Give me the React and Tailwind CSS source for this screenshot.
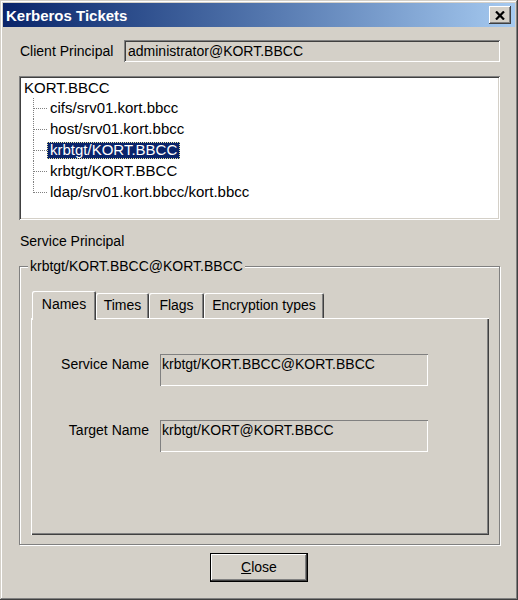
import React from 'react';

const treeItems = [
  { label: 'cifs/srv01.kort.bbcc' },
  { label: 'host/srv01.kort.bbcc' },
  { label: 'krbtgt/KORT.BBCC', selected: true },
  { label: 'krbtgt/KORT.BBCC' },
  { label: 'ldap/srv01.kort.bbcc/kort.bbcc', last: true },
];

const tabs = [
  { label: 'Names', w: 'w-[64px]', active: true },
  { label: 'Times', w: 'w-[53px]' },
  { label: 'Flags', w: 'w-[55px]' },
  { label: 'Encryption types', w: 'w-[120px]' },
];

// dotted tree connector for one child row
const Connector = ({ last }) => (
  <svg width="14" height="21" className="shrink-0">
    <line x1="0.5" y1="0" x2="0.5" y2={last ? 11 : 21} stroke="#808080" strokeDasharray="1 1" />
    <line x1="1" y1="10.5" x2="14" y2="10.5" stroke="#808080" strokeDasharray="1 1" />
  </svg>
);

const Field = ({ label, value }) => (
  <div className="flex">
    <div className="w-[118px] text-right pt-[2px] leading-[17px]">{label}</div>
    <div className="ml-[11px] w-[268px] h-[32px] pl-[2px] pt-[2px] leading-[17px] shadow-[inset_1px_1px_#808080,inset_-1px_-1px_#fff]">
      {value}
    </div>
  </div>
);

export default function App() {
  return (
    <div
      className="w-[518px] h-[600px] bg-[#d4d0c8] p-[3px] flex flex-col text-[14px] text-black shadow-[inset_-1px_-1px_#404040,inset_1px_1px_#d4d0c8,inset_-2px_-2px_#808080,inset_2px_2px_#fff]"
      style={{ fontFamily: '"Liberation Sans", Arial, sans-serif' }}
    >
      {/* Title bar */}
      <div className="h-[24px] shrink-0 bg-gradient-to-r from-[#0a246a] to-[#a6caf0] flex items-center justify-between pl-[3px] pr-[4px]">
        <span className="text-white font-bold text-[15px] leading-none">Kerberos Tickets</span>
        <button className="w-[22px] h-[18px] bg-[#d4d0c8] flex items-center justify-center shadow-[inset_-1px_-1px_#404040,inset_1px_1px_#fff,inset_-2px_-2px_#808080]">
          <svg width="10" height="9" viewBox="0 0 10 9">
            <path d="M1 0.5 L9 8.5 M9 0.5 L1 8.5" stroke="#000" strokeWidth="2.2" />
          </svg>
        </button>
      </div>

      <div className="flex-1 flex flex-col pl-[16px] pr-[15px]">
        {/* Client principal */}
        <div className="mt-[13px] flex items-center h-[22px]">
          <div className="w-[105px] pl-[1px]">Client Principal</div>
          <div className="flex-1 h-[22px] flex items-center pl-[4px] shadow-[inset_1px_1px_#808080,inset_-1px_-1px_#fff,inset_2px_2px_#404040,inset_-2px_-2px_#d4d0c8]">
            administrator@KORT.BBCC
          </div>
        </div>

        {/* Tree */}
        <div className="mt-[14px] h-[144px] bg-white p-[2px] text-[15px] shadow-[inset_1px_1px_#808080,inset_-1px_-1px_#fff,inset_2px_2px_#404040,inset_-2px_-2px_#d4d0c8]">
          <div className="h-[20px] pl-[3px] flex items-center">KORT.BBCC</div>
          <div className="pl-[12px]">
            {treeItems.map((it, i) => (
              <div key={i} className="flex items-center h-[21px]">
                <Connector last={it.last} />
                <span
                  className={
                    it.selected
                      ? 'px-[3px] h-[17px] flex items-center bg-[#0a246a] text-white outline-1 outline-dotted outline-[#e8e4a0] -outline-offset-1'
                      : 'px-[3px] h-[17px] flex items-center'
                  }
                >
                  {it.label}
                </span>
              </div>
            ))}
          </div>
        </div>

        {/* Service principal */}
        <div className="mt-[13px] h-[17px] leading-[17px] pl-[1px]">Service Principal</div>

        <fieldset className="mt-[8px] border border-[#808080] shadow-[inset_1px_1px_#fff,1px_1px_#fff] pl-[11px] pr-[10px] pb-[9px] pt-[16px] m-0">
          <legend className="bg-[#d4d0c8] px-[2px] ml-[-3px] h-[17px] leading-[17px]">krbtgt/KORT.BBCC@KORT.BBCC</legend>

          {/* Tabs */}
          <div className="flex items-end h-[27px] pl-[1px]">
            {tabs.map((t) => (
              <div
                key={t.label}
                className={
                  t.active
                    ? `${t.w} relative z-10 h-[29px] -mb-[2px] bg-[#d4d0c8] rounded-t-[2px] flex justify-center pt-[5px] shadow-[inset_1px_1px_#fff,inset_-1px_0_#404040,inset_-2px_0_#808080]`
                    : `${t.w} h-[25px] bg-[#d4d0c8] rounded-t-[2px] flex justify-center pt-[4px] shadow-[inset_1px_1px_#fff,inset_-1px_0_#404040,inset_-2px_0_#808080]`
                }
              >
                <span className="leading-[17px]">{t.label}</span>
              </div>
            ))}
          </div>

          {/* Tab panel */}
          <div className="h-[217px] pt-[36px] flex flex-col gap-[34px] shadow-[inset_1px_1px_#fff,inset_-1px_-1px_#404040,inset_-2px_-2px_#808080]">
            <Field label="Service Name" value="krbtgt/KORT.BBCC@KORT.BBCC" />
            <Field label="Target Name" value="krbtgt/KORT@KORT.BBCC" />
          </div>
        </fieldset>

        {/* Close button */}
        <div className="mt-[8px] flex justify-center pr-[1px]">
          <button className="w-[98px] h-[29px] bg-[#d4d0c8] border border-black flex items-center justify-center shadow-[inset_-1px_-1px_#404040,inset_1px_1px_#fff,inset_-2px_-2px_#808080]">
            <span><span className="underline">C</span>lose</span>
          </button>
        </div>
      </div>
    </div>
  );
}
